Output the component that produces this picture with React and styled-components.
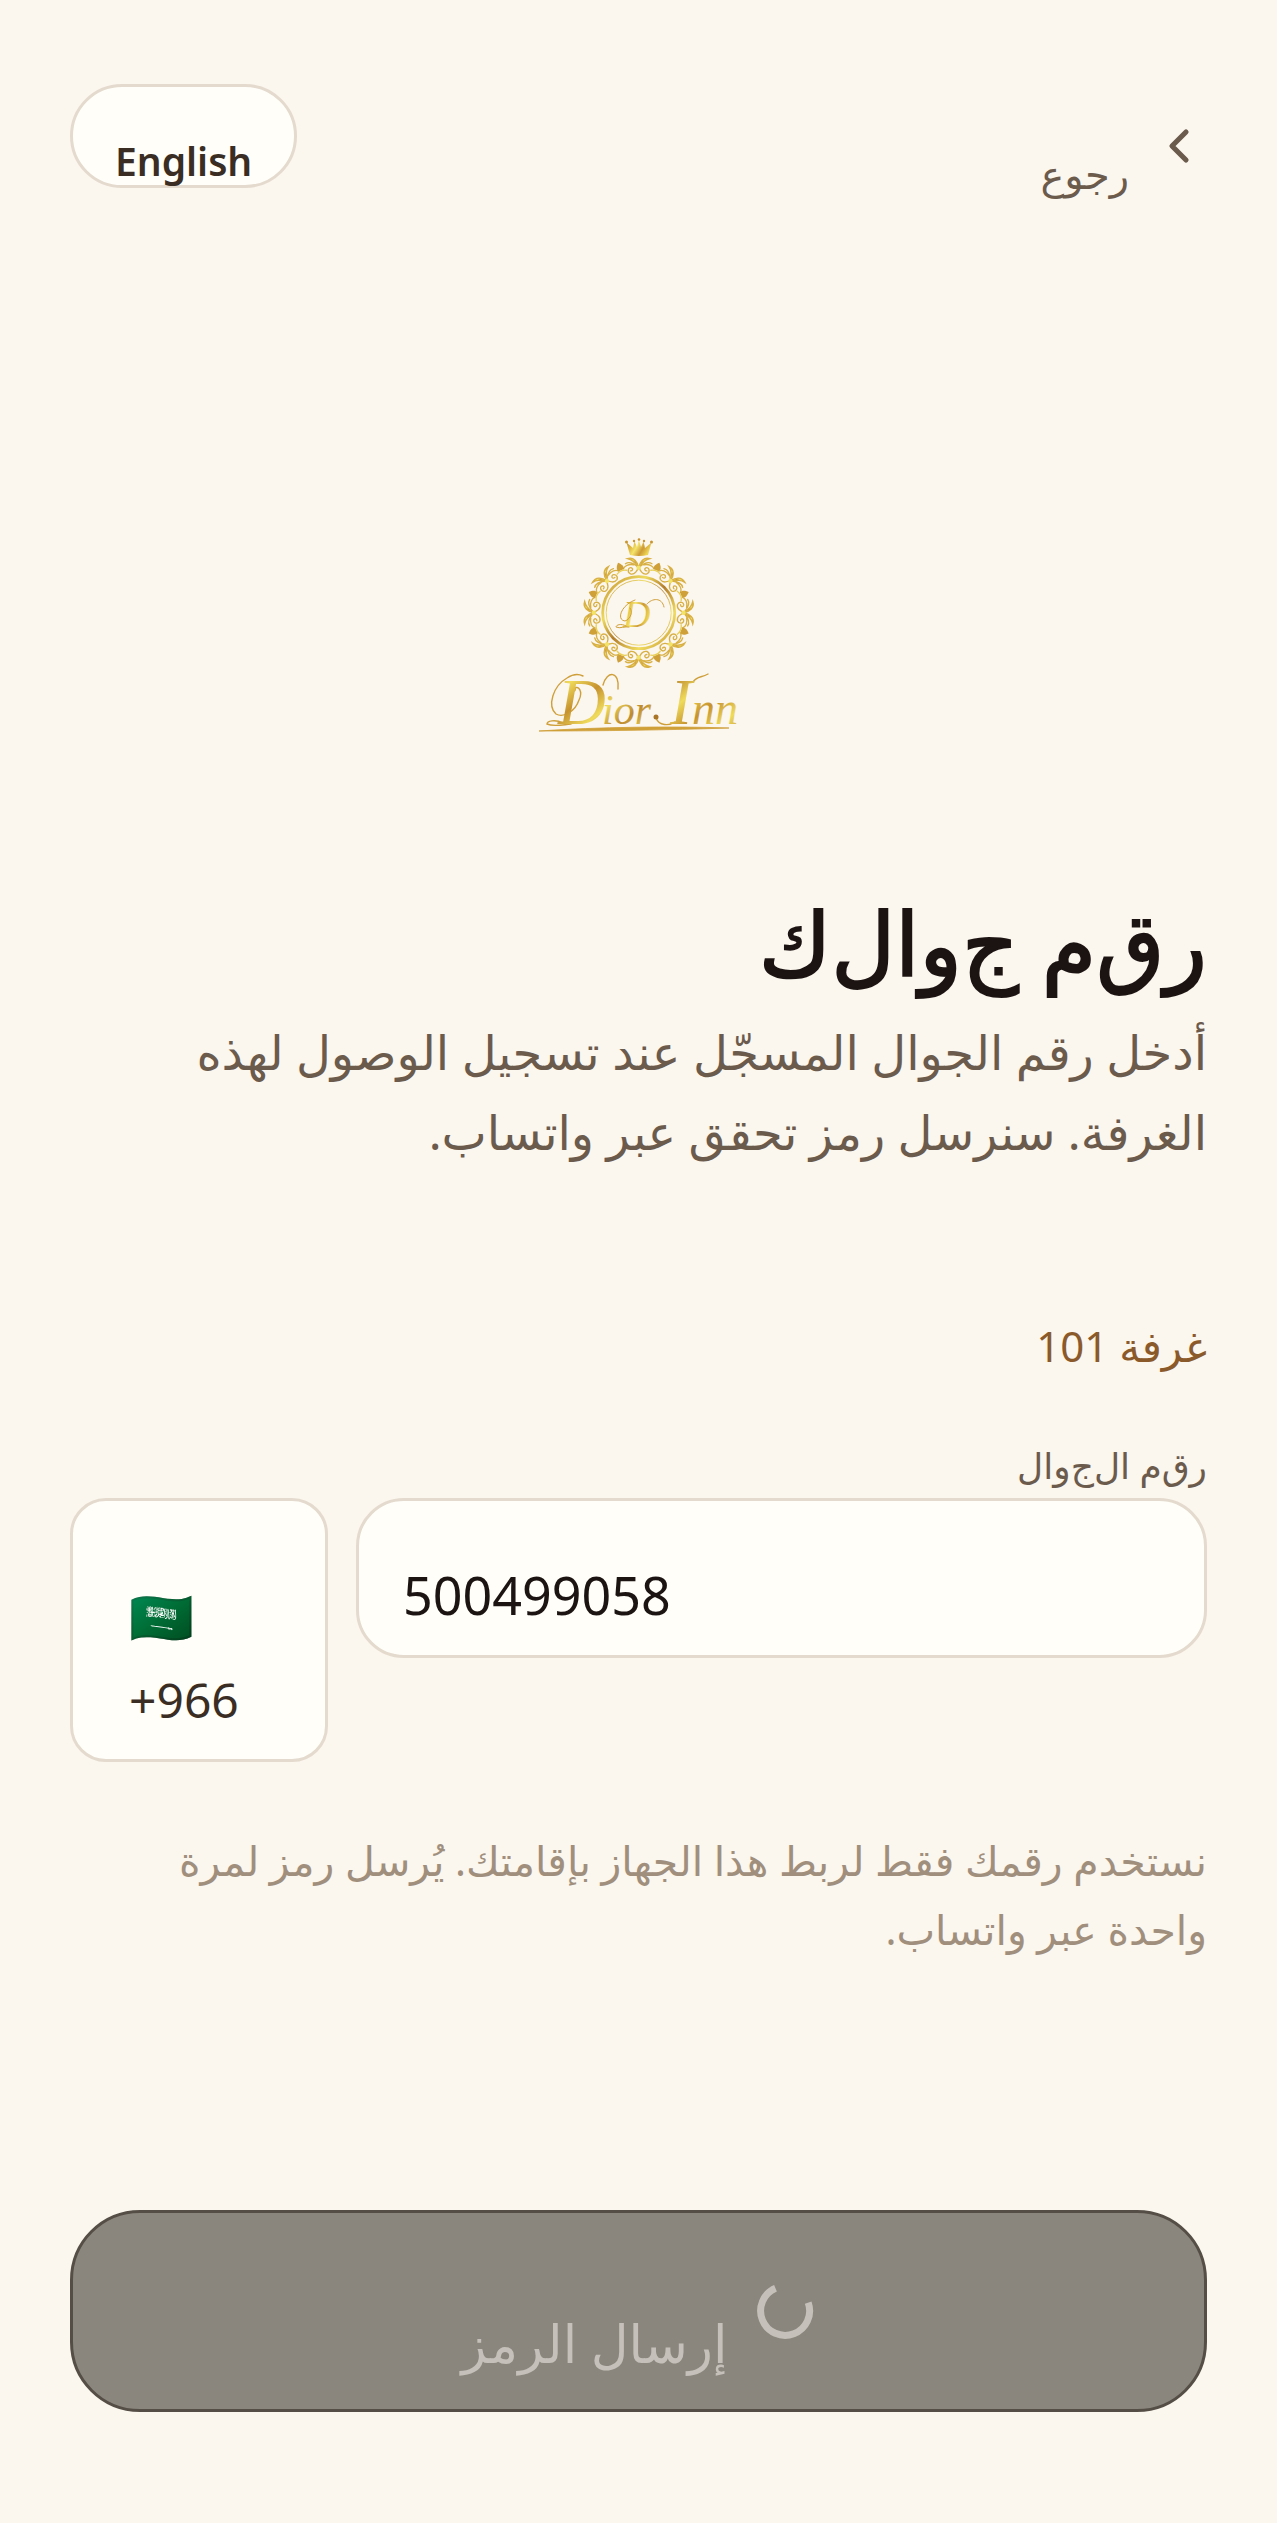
import React from 'react';
import styled, { createGlobalStyle, css } from 'styled-components';

const GlobalStyle = createGlobalStyle`
  * {
    box-sizing: border-box;
  }
  body {
    margin: 0;
    background: #fbf6ee;
    color: #1c1412;
    font-family: 'Noto Sans', 'DejaVu Sans', sans-serif;
  }
`;

// every Arabic letter keeps its stand-alone form
const isolatedLetters = css`
  font-feature-settings: 'init' 0, 'medi' 0, 'fina' 0, 'rlig' 0, 'liga' 0;
`;

const Page = styled.main`
  display: flex;
  flex-direction: column;
  padding: 84px 70px 110px;
`;

const TopBar = styled.header`
  display: flex;
  justify-content: space-between;
  align-items: flex-start;
`;

const BackLink = styled.a`
  display: flex;
  align-items: center;
  gap: 22px;
  padding-top: 34px;
  color: #6b5b4d;
  font-size: 40px;
  line-height: 56px;
  text-decoration: none;

  span {
    padding-top: 28px;
  }
  svg {
    width: 56px;
    height: 56px;
    margin-bottom: 28px;
  }
`;

const LanguageButton = styled.button`
  height: 104px;
  padding: 50px 42px 0;
  border: 3px solid #e4dacd;
  border-radius: 52px;
  background: #fffef9;
  color: #3a2d24;
  font: 600 39px/48px 'Noto Sans', sans-serif;
`;

const LogoWrap = styled.div`
  display: flex;
  justify-content: center;
  margin-top: 326px;

  svg {
    width: 220px;
    height: 220px;
  }
`;

const Title = styled.h1`
  margin: 124px 0 0;
  font-size: 88px;
  font-weight: 400;
  line-height: 140px;
  -webkit-text-stroke: 2px currentColor;
  ${isolatedLetters}
`;

const Lead = styled.p`
  margin: 0;
  padding-inline-end: 48px;
  color: #6b5b4d;
  font-size: 48px;
  line-height: 80px;
`;

const Room = styled.p`
  margin: 134px 0 0;
  color: #8b5a2b;
  font-size: 42px;
  line-height: 80px;
`;

const FieldLabel = styled.label`
  margin-top: 48px;
  color: #6b5b4d;
  font-size: 36px;
  line-height: 64px;
  ${isolatedLetters}
`;

const PhoneRow = styled.div`
  display: flex;
  align-items: flex-start;
  gap: 28px;
`;

const Prefix = styled.div`
  width: 258px;
  padding: 74px 56px 18px;
  border: 3px solid #e4dacd;
  border-radius: 36px;
  background: #fffef9;
  color: #3a2d24;
  font-size: 48px;
  line-height: 82px;
`;

const Flag = styled.span`
  font-size: 52px;
`;

const PhoneInput = styled.input`
  flex: 1;
  min-width: 0;
  height: 160px;
  padding: 32px 44px 0;
  border: 3px solid #e4dacd;
  border-radius: 48px;
  background: #fffef9;
  color: #1c1412;
  font: 400 52px/80px 'Noto Sans', sans-serif;
`;

const Hint = styled.p`
  margin: 64px 0 0;
  padding-inline-end: 64px;
  color: #a08f7d;
  font-size: 41px;
  line-height: 69px;
`;

const SubmitButton = styled.button`
  display: flex;
  justify-content: center;
  align-items: center;
  gap: 28px;
  height: 202px;
  margin-top: 246px;
  border: 3px solid #544e46;
  border-radius: 70px;
  background: #8a857d;
  color: #c5c0b9;
  font: 400 52px/80px 'Noto Sans', 'DejaVu Sans', sans-serif;

  span {
    padding-top: 64px;
  }
  svg {
    width: 60px;
    height: 60px;
  }
`;

const LogoText = styled.text`
  font-family: 'Liberation Serif', serif;
  font-style: italic;
`;

const ChevronIcon = () => (
  <svg viewBox="0 0 24 24" fill="none" stroke="currentColor" strokeWidth="2.2" strokeLinecap="round" strokeLinejoin="round">
    <path d="m15 18-6-6 6-6" />
  </svg>
);

const Spinner = () => (
  <svg viewBox="0 0 60 60" fill="none" stroke="currentColor" strokeWidth="7">
    <path d="M20.5 7.3A24.5 24.5 0 1 0 53.2 21.6" />
  </svg>
);

const HalfFleur = () => (
  <>
    <path d="M0-44C-1-50-5-55-11-53C-6-52-4-49 0-44Z" fill="url(#gold)" />
    <path d="M0-46C-1-41-4-37-8-38C-12-40-10-45-7-44C-5-43-6-41-8-41" />
    <path d="M-1-45C-7-50-10-50-13-48M-5-47C-10-48-14-46-15-43" />
  </>
);

const Logo = () => (
  <svg viewBox="0 0 220 220" direction="ltr" role="img" aria-label="Dior Inn">
    <defs>
      <linearGradient id="gold" x1="0" y1="0" x2="1" y2="0.4">
        <stop offset="0" stopColor="#b8862f" />
        <stop offset="0.3" stopColor="#e0b93f" />
        <stop offset="0.5" stopColor="#f4e46c" />
        <stop offset="0.75" stopColor="#cd9a35" />
        <stop offset="1" stopColor="#eed654" />
      </linearGradient>
      <linearGradient id="script" x1="0" y1="0" x2="0.3" y2="0.15" spreadMethod="reflect">
        <stop offset="0" stopColor="#bd8a30" />
        <stop offset="0.5" stopColor="#efdb5c" />
        <stop offset="1" stopColor="#c6922f" />
      </linearGradient>
      <linearGradient id="ring" x1="0" y1="0" x2="1" y2="1">
        <stop offset="0" stopColor="#c08c30" />
        <stop offset="0.3" stopColor="#eedb5e" />
        <stop offset="0.5" stopColor="#b37d2c" />
        <stop offset="0.75" stopColor="#f0dc60" />
        <stop offset="1" stopColor="#c08c30" />
      </linearGradient>
    </defs>
    <path
      d="M101 27 97.5 14.5 104 20 105.5 13.5 108 19 110 12 112 19 114.5 13.5 116 20 122.5 14.5 119 27Q110 29 101 27Z"
      fill="url(#gold)"
    />
    <g fill="#c9952f">
      <circle cx="97.5" cy="14" r="1.5" />
      <circle cx="105" cy="13" r="1.2" />
      <circle cx="110" cy="11.5" r="1.3" />
      <circle cx="115" cy="13" r="1.2" />
      <circle cx="122.5" cy="14" r="1.5" />
    </g>
    <g transform="translate(109.7 84.7)">
      <g fill="none" stroke="url(#ring)">
        <circle r="36" strokeWidth="2.8" />
        <circle r="32.5" strokeWidth="0.9" />
      </g>
      {[0, 45, 90, 135, 180, 225, 270, 315].map((angle) => (
        <g key={angle} transform={`rotate(${angle}) scale(1.02)`} fill="none" stroke="#d8b044" strokeWidth="1.3" strokeLinecap="round">
          <HalfFleur />
          <g transform="scale(-1 1)">
            <HalfFleur />
          </g>
          <circle cy="-44" r="2.2" fill="#f3e268" stroke="none" />
          <path d="M0-53C3-50 4-48 3-45H-3C-4-48-3-50 0-53Z" transform="rotate(22.5)" fill="#cf9f38" stroke="none" />
          <path d="M-5-43Q0-46 5-43" transform="rotate(22.5)" stroke="#e9cf55" />
        </g>
      ))}
    </g>
    <LogoText x="94" y="99" fontSize="38" fill="url(#gold)">D</LogoText>
    <g fill="none" stroke="#cfa03a" strokeLinecap="round">
      <path d="M101 80C104 83 102 91 96 93C87 92 92 77 106 72M118 76C123 70 133 69 135 79M97 98C92 95 87 97 87 99C91 101 96 98 100 99" strokeWidth="1" />
      <path
        d="M44 161C50 156 54 164 50 172C46 184 34 190 27 186C18 178 24 158 38 150C44 146 50 146 54 148M74 157C78 142 91 143 89 161M34 195C26 191 18 193 18 196C24 199 32 197 42 196M164 154C168 148 172 150 179 146M146 194C140 198 130 198 127 190"
        strokeWidth="1.4"
      />
    </g>
    <circle cx="44" cy="161" r="3" fill="#d5aa3d" />
    <circle cx="127" cy="189" r="2.5" fill="#a87426" />
    <LogoText y="196" fill="url(#script)">
      <tspan x="29" fontSize="66">D</tspan>
      <tspan x="73" fontSize="42">ior </tspan>
      <tspan x="141" fontSize="66">I</tspan>
      <tspan x="163" fontSize="46">nn</tspan>
    </LogoText>
    <path d="M10 203C70 199 140 198 200 200C140 202 70 203 10 203Z" fill="#cf9f38" stroke="#cf9f38" strokeWidth="0.8" />
  </svg>
);

export default function App() {
  return (
    <Page dir="rtl" lang="ar">
      <GlobalStyle />
      <TopBar>
        <BackLink href="#back">
          <ChevronIcon />
          <span>رجوع</span>
        </BackLink>
        <LanguageButton type="button">English</LanguageButton>
      </TopBar>
      <LogoWrap>
        <Logo />
      </LogoWrap>
      <Title>رقم جوالك</Title>
      <Lead>أدخل رقم الجوال المسجّل عند تسجيل الوصول لهذه الغرفة. سنرسل رمز تحقق عبر واتساب.</Lead>
      <Room>غرفة 101</Room>
      <FieldLabel htmlFor="phone">رقم الجوال</FieldLabel>
      <PhoneRow dir="ltr">
        <Prefix>
          <Flag>🇸🇦</Flag> +966
        </Prefix>
        <PhoneInput id="phone" type="tel" defaultValue="500499058" />
      </PhoneRow>
      <Hint>نستخدم رقمك فقط لربط هذا الجهاز بإقامتك. يُرسل رمز لمرة واحدة عبر واتساب.</Hint>
      <SubmitButton type="submit">
        <Spinner />
        <span>إرسال الرمز</span>
      </SubmitButton>
    </Page>
  );
}
